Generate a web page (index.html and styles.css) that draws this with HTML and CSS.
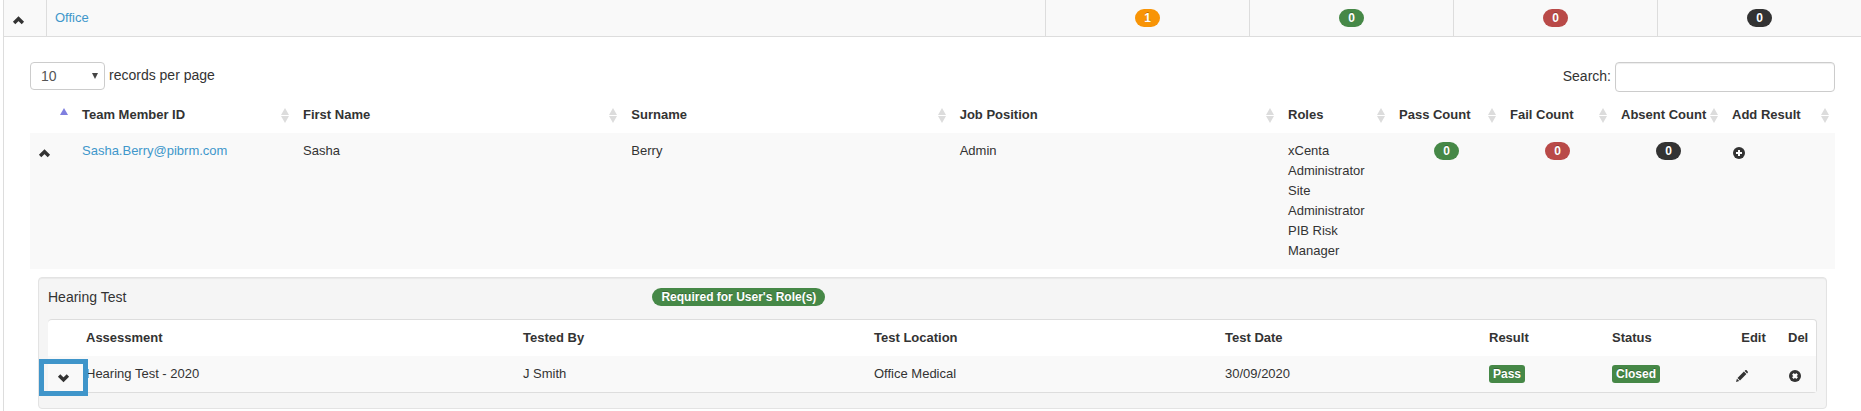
FILE: index.html
```html
<!DOCTYPE html>
<html lang="en">
<head>
<meta charset="utf-8">
<title>Office assessments</title>
<link rel="stylesheet" href="styles.css">
</head>
<body>
<svg class="sprite" aria-hidden="true">
  <symbol id="up" viewBox="0 0 14 14"><path d="M2.100 9.900 6.500 5.700l4.400 4.200" fill="none" stroke="#333" stroke-width="3.400"/></symbol>
  <symbol id="down" viewBox="0 0 14 14"><path d="M2.100 4.600 6.500 8.800l4.400-4.200" fill="none" stroke="#333" stroke-width="3.400"/></symbol>
  <symbol id="plus" viewBox="0 0 14 14"><circle cx="7" cy="7" r="6" fill="#333"/><path d="M7 4v6M4 7h6" stroke="#fff" stroke-width="2"/></symbol>
  <symbol id="remove" viewBox="0 0 14 14"><circle cx="7" cy="7" r="6" fill="#333"/><path d="m4.900 4.900 4.200 4.200M9.100 4.900 4.900 9.100" stroke="#fff" stroke-width="2.400"/></symbol>
  <symbol id="pencil" viewBox="0 0 14 14"><path d="m1 13 .9-3.300 2.400 2.400zM2.500 9 8.900 2.600l2.500 2.500L5 11.500zM9.600 1.900l.7-.6c.4-.4.9-.4 1.300 0l1.100 1.100c.4.4.4.9 0 1.300l-.6.7z" fill="#333"/></symbol>
  <symbol id="sort" viewBox="0 0 8 15"><path d="M4 0l4 7H0zM4 15 0 8h8z" fill="#dcdcdc"/></symbol>
  <symbol id="sorted" viewBox="0 0 8 15"><path d="M4 0l4 7H0z" fill="#7f7fdf"/></symbol>
</svg>
<main class="page">
  <table class="sites">
    <colgroup><col class="site-toggle"><col><col class="site-count"><col class="site-count"><col class="site-count"><col class="site-count"></colgroup>
    <tbody><tr>
      <td><button class="icon-button" aria-label="Collapse Office"><svg class="icon"><use href="#up"/></svg></button></td>
      <td><a href="#">Office</a></td>
      <td class="count"><span class="badge warning">1</span></td>
      <td class="count"><span class="badge success">0</span></td>
      <td class="count"><span class="badge danger">0</span></td>
      <td class="count"><span class="badge inverse">0</span></td>
    </tr></tbody>
  </table>
  <section class="content">
    <div class="toolbar">
      <div class="field">
        <span class="select"><select id="length"><option>10</option><option>25</option><option>50</option></select></span>
        <label for="length">records per page</label>
      </div>
      <div class="field">
        <label for="search">Search:</label>
        <input id="search" class="search" type="text">
      </div>
    </div>
    <table class="members">
      <colgroup><col class="member-toggle"><col class="member-id"><col><col><col><col class="member-small"><col class="member-small"><col class="member-small"><col class="member-small"><col class="member-small"></colgroup>
      <thead><tr>
        <th><div class="head"><span></span><svg class="sort"><use href="#sorted"/></svg></div></th>
        <th><div class="head"><span>Team Member ID</span><svg class="sort"><use href="#sort"/></svg></div></th>
        <th><div class="head"><span>First Name</span><svg class="sort"><use href="#sort"/></svg></div></th>
        <th><div class="head"><span>Surname</span><svg class="sort"><use href="#sort"/></svg></div></th>
        <th><div class="head"><span>Job Position</span><svg class="sort"><use href="#sort"/></svg></div></th>
        <th><div class="head"><span>Roles</span><svg class="sort"><use href="#sort"/></svg></div></th>
        <th><div class="head"><span>Pass Count</span><svg class="sort"><use href="#sort"/></svg></div></th>
        <th><div class="head"><span>Fail Count</span><svg class="sort"><use href="#sort"/></svg></div></th>
        <th><div class="head"><span>Absent Count</span><svg class="sort"><use href="#sort"/></svg></div></th>
        <th><div class="head"><span>Add Result</span><svg class="sort"><use href="#sort"/></svg></div></th>
      </tr></thead>
      <tbody>
        <tr class="striped">
          <td><button class="icon-button" aria-label="Collapse member"><svg class="icon"><use href="#up"/></svg></button></td>
          <td><a href="#">Sasha.Berry@pibrm.com</a></td>
          <td>Sasha</td>
          <td>Berry</td>
          <td>Admin</td>
          <td>xCenta Administrator<br>Site Administrator<br>PIB Risk Manager</td>
          <td class="count"><span class="badge success">0</span></td>
          <td class="count"><span class="badge danger">0</span></td>
          <td class="count"><span class="badge inverse">0</span></td>
          <td><button class="icon-button" aria-label="Add result"><svg class="icon"><use href="#plus"/></svg></button></td>
        </tr>
        <tr>
          <td class="detail" colspan="10">
            <div class="well">
              <div class="well-head">
                <span class="well-title">Hearing Test</span>
                <span class="badge success">Required for User's Role(s)</span>
              </div>
              <table class="tests">
                <colgroup><col class="test-toggle"><col class="test-name"><col class="test-info"><col class="test-info"><col><col class="test-result"><col class="test-result"><col class="test-edit"><col class="test-del"></colgroup>
                <thead><tr>
                  <th></th><th>Assessment</th><th>Tested By</th><th>Test Location</th><th>Test Date</th><th>Result</th><th>Status</th><th class="count">Edit</th><th>Del</th>
                </tr></thead>
                <tbody><tr class="striped">
                  <td class="marked"><button class="highlight" aria-label="Expand assessment"><svg class="icon"><use href="#down"/></svg></button></td>
                  <td>Hearing Test - 2020</td>
                  <td>J Smith</td>
                  <td>Office Medical</td>
                  <td>30/09/2020</td>
                  <td><span class="label success">Pass</span></td>
                  <td><span class="label success">Closed</span></td>
                  <td><button class="icon-button" aria-label="Edit"><svg class="icon"><use href="#pencil"/></svg></button></td>
                  <td><button class="icon-button" aria-label="Delete"><svg class="icon"><use href="#remove"/></svg></button></td>
                </tr></tbody>
              </table>
            </div>
          </td>
        </tr>
      </tbody>
    </table>
  </section>
</main>
</body>
</html>
```
FILE: styles.css
```css
* { box-sizing: border-box; }
body {
  margin: 0;
  background: #fff;
  color: #333;
  font: 13px/20px "Liberation Sans", Arial, sans-serif;
}
a { color: #4097cb; text-decoration: none; }
button { border: 0; padding: 0; background: none; cursor: pointer; }
.sprite { display: none; }
.page {
  min-height: 100vh;
  margin-left: 3px;
  border-left: 1px solid #ddd;
}
table { width: 100%; border-spacing: 0; table-layout: fixed; }
th, td { padding: 8px; text-align: left; vertical-align: top; }
.count { text-align: center; }
.striped td { background: #f9f9f9; }

.icon-button { display: block; margin-top: 5px; }
.icon { display: block; width: 14px; height: 14px; }

.badge, .label {
  display: inline-block;
  height: 18px;
  margin: 1px 0;
  color: #fff;
  font-size: 12px;
  font-weight: bold;
  line-height: 18px;
  text-shadow: 0 -1px 0 rgba(0, 0, 0, .25);
  white-space: nowrap;
  vertical-align: top;
}
.badge { padding: 0 9px; border-radius: 9px; }
.label { padding: 0 4px; border-radius: 3px; }
.warning { background: #f89406; }
.success { background: #468847; }
.danger { background: #b94a48; }
.inverse { background: #333; }

.sites td { background: #f9f9f9; border-bottom: 1px solid #ddd; }
.sites td + td { border-left: 1px solid #ddd; }
.site-toggle { width: 42px; }
.site-count { width: 204px; }

.content { padding: 25px 26px 0; }
.toolbar {
  display: flex;
  justify-content: space-between;
  align-items: flex-start;
  margin-bottom: 5px;
  font-size: 14px;
}
.field { display: flex; align-items: center; gap: 4px; }
.field label { padding-bottom: 2px; }
.select { position: relative; }
.select::after {
  content: "";
  position: absolute;
  top: 11px;
  right: 7px;
  border: 3px solid transparent;
  border-top: 6px solid #444;
  border-bottom: 0;
  pointer-events: none;
}
select, .search {
  display: block;
  border: 1px solid #ccc;
  border-radius: 4px;
  background: #fff;
  color: #555;
  font: 14px/20px "Liberation Sans", Arial, sans-serif;
}
select { width: 75px; height: 28px; padding: 0 10px; appearance: none; }
.search {
  width: 220px;
  height: 30px;
  padding: 4px 6px;
  box-shadow: inset 0 1px 1px rgba(0, 0, 0, .075);
}

.member-toggle { width: 44px; }
.member-id { width: 221px; }
.member-small { width: 111px; }
.members > thead th { padding-right: 6px; }
.head {
  display: flex;
  justify-content: space-between;
  align-items: center;
  min-height: 20px;
  white-space: nowrap;
}
.sort { width: 8px; height: 15px; }
.members .detail { padding-bottom: 0; }

.well {
  padding: 9px;
  border: 1px solid #e3e3e3;
  border-radius: 4px;
  background: #f5f5f5;
  box-shadow: inset 0 1px 1px rgba(0, 0, 0, .05);
}
.well-head { display: flex; gap: 3px; margin-bottom: 12px; font-size: 14px; }
.well-title { width: 34%; }

.tests {
  margin-bottom: 6px;
  border: 1px solid #ddd;
  border-left: 0;
  border-radius: 4px;
  background: #fff;
}
.test-toggle { width: 30px; }
.test-name { width: 437px; }
.test-info { width: 351px; }
.test-result { width: 123px; }
.test-edit { width: 53px; }
.test-del { width: 36px; }
.marked { position: relative; }
.highlight {
  position: absolute;
  top: 3px;
  left: -9px;
  display: grid;
  place-items: center;
  width: 49px;
  height: 37px;
  border: 5px solid #3f95ca;
}
```
